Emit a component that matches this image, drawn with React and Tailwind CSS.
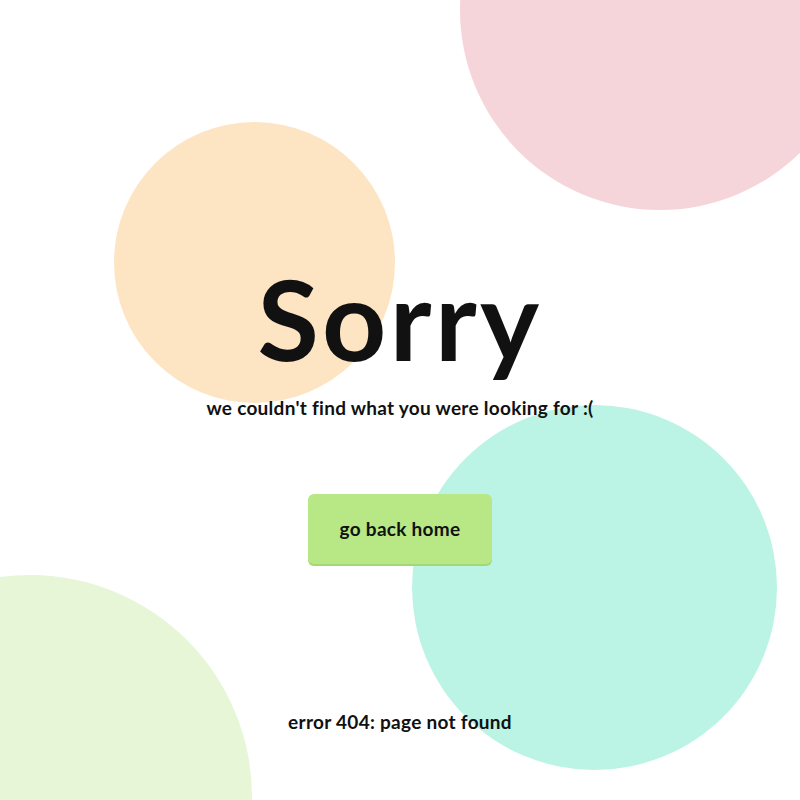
export default function App() {
  return (
    <div className="relative h-[800px] w-full overflow-hidden bg-white font-['Lato','Noto_Sans',sans-serif] text-[#111]">
      {/* decorative blobs */}
      <div className="absolute left-[460px] top-[-190px] h-[400px] w-[400px] rounded-full bg-[#f5d5da]" />
      <div className="absolute left-[114px] top-[122px] h-[281px] w-[281px] rounded-full bg-[#fde5c4]" />
      <div className="absolute left-[412px] top-[405px] h-[365px] w-[365px] rounded-full bg-[#bbf3e5]" />
      <div className="absolute left-[-192px] top-[575px] h-[444px] w-[444px] rounded-full bg-[#e6f6d7]" />

      <main className="relative flex flex-col items-center pt-[262px]">
        <h1 className="text-[112px] font-bold leading-none tracking-[0.03em]">Sorry</h1>
        <p className="mt-[22px] text-[19px] font-bold leading-[24px] tracking-[0.015em]">
          we couldn't find what you were looking for :(
        </p>
        <a
          href="#"
          className="mt-[74px] flex h-[70px] w-[184px] items-center justify-center rounded-md bg-[#b7e885] text-[19px] font-bold tracking-[0.015em] shadow-[0_2px_0_#a3d872]"
        >
          go back home
        </a>
        <p className="mt-[146px] text-[19px] font-bold leading-[24px] tracking-[0.015em]">error 404: page not found</p>
      </main>
    </div>
  );
}
